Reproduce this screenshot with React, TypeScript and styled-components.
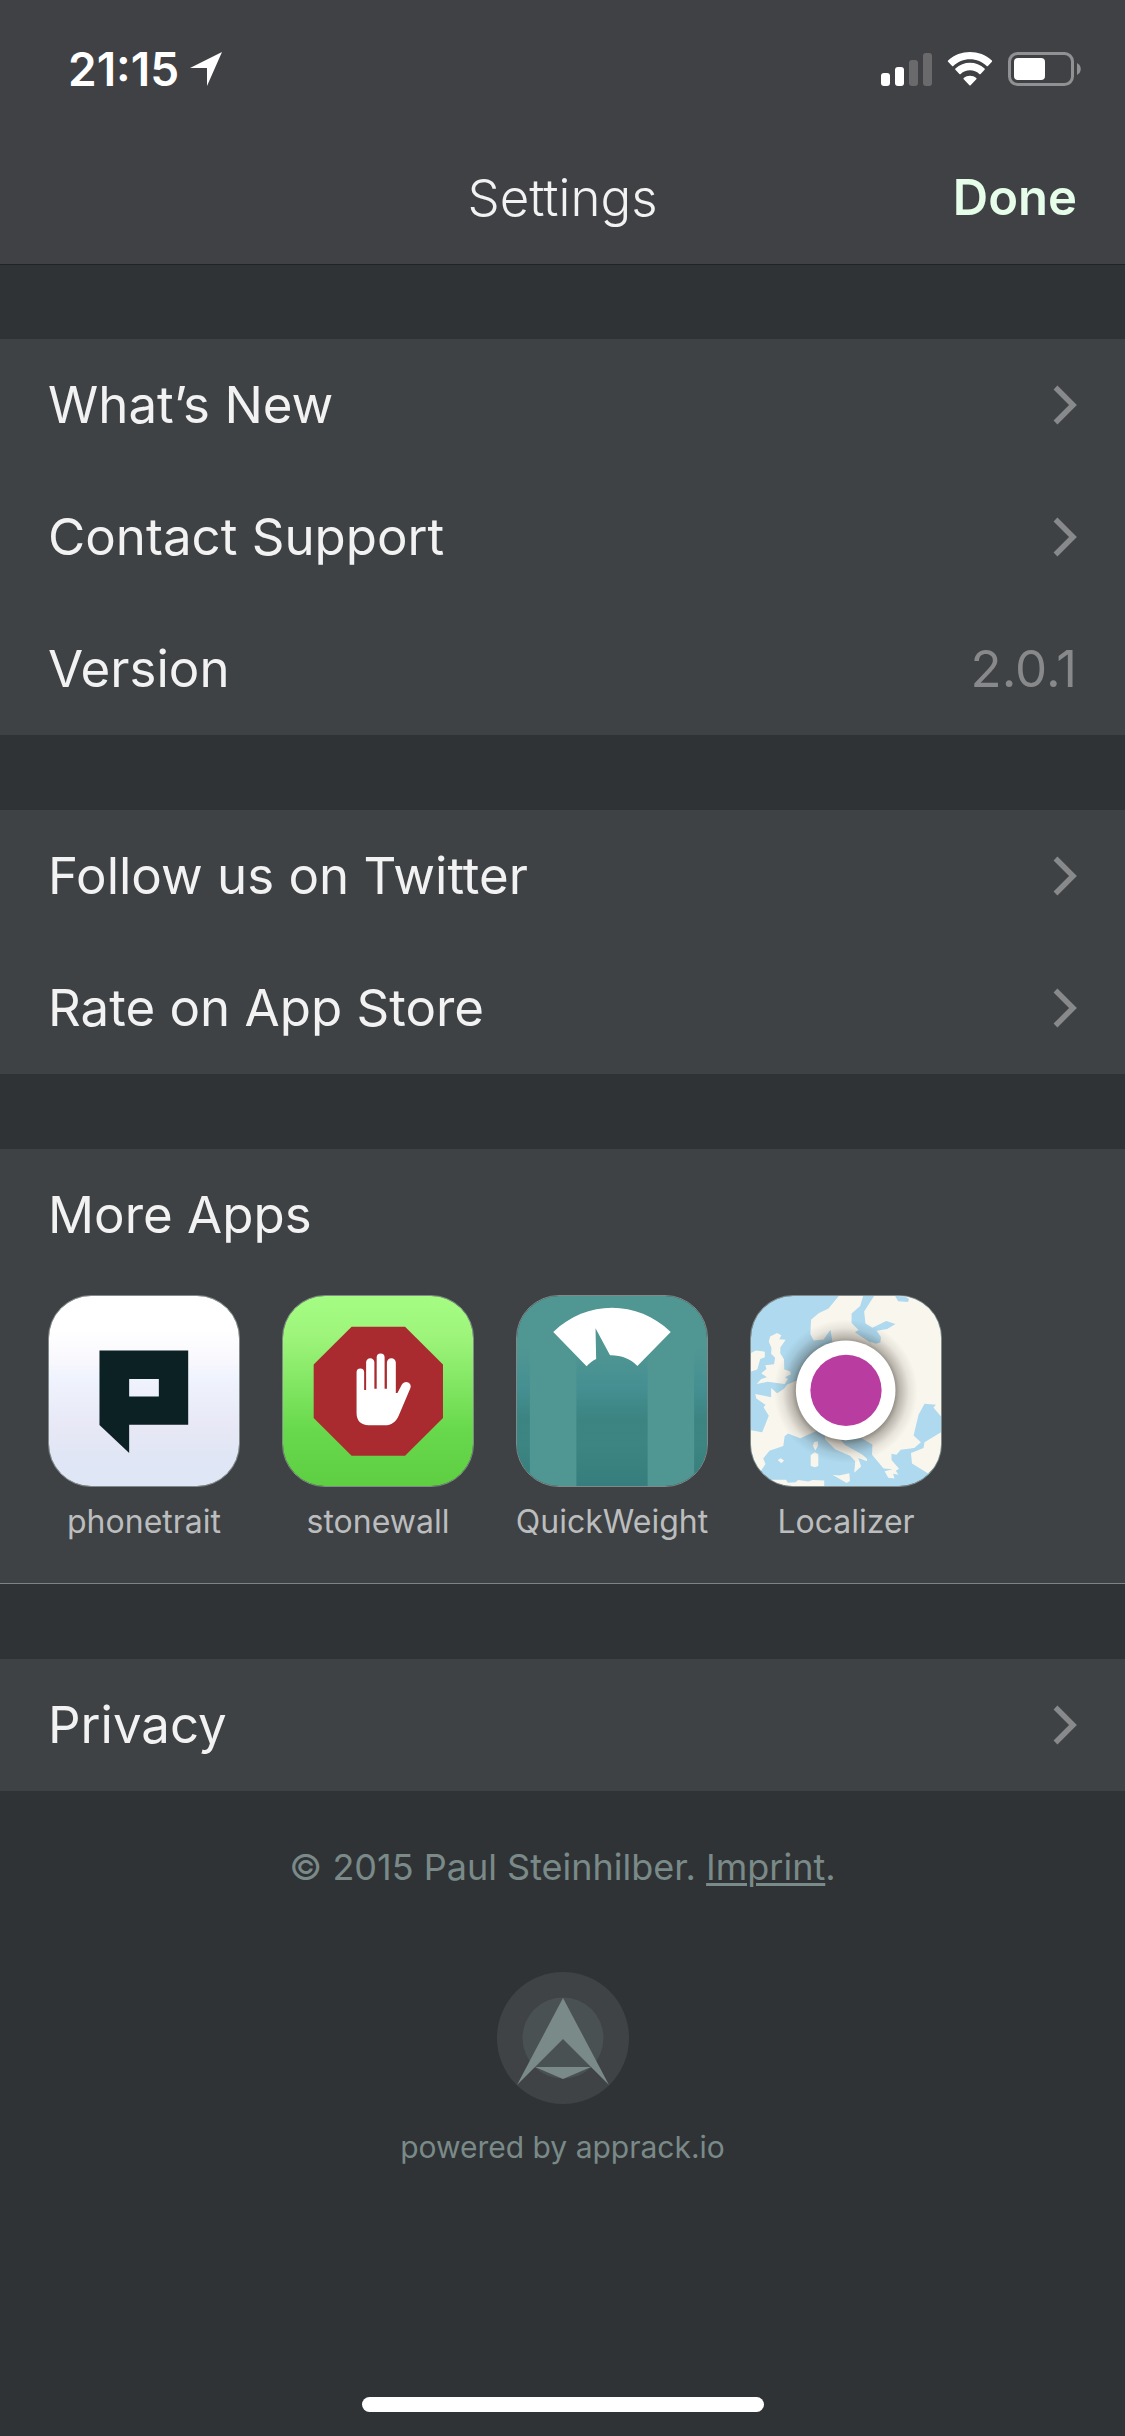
import React from "react";
import styled, { createGlobalStyle } from "styled-components";

const color = {
  page: "#2f3336",
  bar: "#404145",
  barLine: "#212226",
  section: "#3e4244",
  sectionLine: "#788786",
  text: "#f2f2f2",
  muted: "#88898b",
  caption: "#bcbdbe",
  accent: "#e6fdea",
  footer: "#7a8a88",
};

const GlobalStyle = createGlobalStyle`
  *, *::before, *::after { box-sizing: border-box; }
  body {
    margin: 0;
    background: ${color.page};
    color: ${color.text};
    font-family: Inter, "Liberation Sans", sans-serif;
  }
  h1, h2, p, ul { margin: 0; padding: 0; }
  ul { list-style: none; }
`;

const Screen = styled.div`
  display: flex;
  flex-direction: column;
  min-height: 100vh;
`;

const TopBar = styled.header`
  background: ${color.bar};
  border-bottom: 1px solid ${color.barLine};
`;

const StatusBar = styled.div`
  display: flex;
  align-items: center;
  justify-content: space-between;
  height: 132px;
  padding: 6px 44px 0 68px;
`;

const StatusGroup = styled.div<{ $gap: number }>`
  display: flex;
  align-items: center;
  gap: ${(p) => p.$gap}px;
`;

const Clock = styled.time`
  font-size: 46px;
  line-height: 54px;
  font-weight: 600;
  color: #fff;
`;

const NavBar = styled.div`
  display: grid;
  grid-template-columns: 1fr auto 1fr;
  align-items: center;
  height: 132px;
  padding: 0 48px;
`;

const Title = styled.h1`
  grid-column: 2;
  font-size: 51px;
  line-height: 64px;
  font-weight: 300;
`;

const DoneButton = styled.button`
  justify-self: end;
  padding: 0;
  border: 0;
  background: none;
  color: ${color.accent};
  font: inherit;
  font-size: 49px;
  line-height: 64px;
  font-weight: 600;
  cursor: pointer;
`;

const Content = styled.main`
  display: flex;
  flex-direction: column;
  gap: 75px;
  padding-top: 74px;
`;

const Section = styled.section<{ $lined?: boolean }>`
  background: ${color.section};
  border-bottom: ${(p) => (p.$lined ? `1px solid ${color.sectionLine}` : "0")};
`;

const Row = styled.div`
  display: flex;
  align-items: center;
  justify-content: space-between;
  height: 132px;
  padding: 0 48px;
  color: ${color.text};
  font-size: 51px;
  line-height: 64px;
  text-decoration: none;
`;

const Heading = styled.h2`
  font: inherit;
`;

const Value = styled.span`
  color: ${color.muted};
`;

const AppList = styled.ul`
  display: flex;
  gap: 42px;
  padding: 14px 48px 40px;
`;

const AppLink = styled.a`
  display: flex;
  flex-direction: column;
  align-items: center;
  gap: 14px;
  width: 192px;
  color: ${color.caption};
  font-size: 32px;
  line-height: 42px;
  white-space: nowrap;
  text-decoration: none;
`;

const AppIcon = styled.svg`
  display: block;
  width: 192px;
  height: 192px;
  border: 1px solid #808a88;
  border-radius: 43px;
`;

const Footer = styled.footer`
  display: flex;
  flex: 1;
  flex-direction: column;
  align-items: center;
  padding-top: 52px;
  color: ${color.footer};
`;

const Copyright = styled.p`
  font-size: 36px;
  line-height: 48px;
`;

const TextLink = styled.a`
  color: inherit;
  text-decoration-thickness: 3px;
  text-underline-offset: 3px;
`;

const PoweredBy = styled.a`
  display: flex;
  flex-direction: column;
  align-items: center;
  gap: 22px;
  margin-top: 81px;
  color: inherit;
  font-size: 30px;
  line-height: 42px;
  text-decoration: none;
`;

const HomeIndicator = styled.div`
  width: 402px;
  height: 15px;
  margin: auto auto 24px;
  border-radius: 8px;
  background: #fff;
`;

function LocationArrow() {
  return (
    <svg width="32" height="34" viewBox="0 0 32 34" aria-hidden="true">
      <path d="M32 0 17 34V16H0Z" fill="#fff" />
    </svg>
  );
}

function SignalIcon() {
  return (
    <svg width="51" height="33" viewBox="0 0 51 33" fill="#fff" aria-hidden="true">
      <rect x="0" y="20" width="9" height="13" rx="3" />
      <rect x="14" y="14" width="9" height="19" rx="3" />
      <rect x="28" y="7" width="9" height="26" rx="3" opacity="0.22" />
      <rect x="42" y="0" width="9" height="33" rx="3" opacity="0.22" />
    </svg>
  );
}

function WifiIcon() {
  return (
    <svg width="46" height="34" viewBox="0 0 46 34" fill="#fff" aria-hidden="true">
      <path d="M23 7.2c6.400 0 12.300 2.500 16.700 6.800.3.300.9.300 1.200 0l4-4.200c.3-.4.300-.9 0-1.300C32.700-2.800 13.300-2.800 1.100 8.500c-.4.400-.4.900 0 1.300l4 4.200c.3.300.9.300 1.200 0C10.700 9.700 16.600 7.200 23 7.200Z" />
      <path d="M23 18.300c3.500 0 6.800 1.300 9.300 3.600.4.300.9.300 1.300 0l4-4.200c.3-.4.300-.9 0-1.300-8.200-7.700-21-7.700-29.200 0-.3.400-.3.900 0 1.300l4 4.200c.4.300.9.300 1.300 0 2.500-2.300 5.800-3.600 9.300-3.600Z" />
      <path d="M29.300 26c.4.400.4 1 0 1.300l-5.700 5.900c-.3.400-.9.400-1.200 0L16.700 27.300c-.4-.3-.4-.9 0-1.300 3.600-3.100 9-3.100 12.600 0Z" />
    </svg>
  );
}

function BatteryIcon() {
  return (
    <svg width="73" height="34" viewBox="0 0 73 34" aria-hidden="true">
      <rect x="1.500" y="1.500" width="63" height="31" rx="8" fill="none" stroke="#909193" strokeWidth="3" />
      <rect x="6" y="6" width="31" height="22" rx="4" fill="#fff" />
      <path d="M69 11c5 2.500 5 9.500 0 12Z" fill="#909193" />
    </svg>
  );
}

function Chevron() {
  return (
    <svg width="24" height="40" viewBox="0 0 24 40" aria-hidden="true">
      <path d="M2.500 2.500 20 20 2.500 37.500" fill="none" stroke={color.muted} strokeWidth="5.500" />
    </svg>
  );
}

function PhonetraitIcon() {
  return (
    <AppIcon viewBox="54 75 576 576" aria-hidden="true">
      <defs>
        <linearGradient id="phonetrait-bg" x1="0" y1="0" x2="0" y2="1">
          <stop offset="0" stopColor="#fff" />
          <stop offset="0.180" stopColor="#fff" />
          <stop offset="0.350" stopColor="#f8f7fd" />
          <stop offset="0.420" stopColor="#f0f4fe" />
          <stop offset="0.680" stopColor="#e8e8f6" />
          <stop offset="0.850" stopColor="#e0e6f5" />
          <stop offset="1" stopColor="#dfe6f5" />
        </linearGradient>
      </defs>
      <rect x="54" y="75" width="576" height="576" fill="url(#phonetrait-bg)" />
      <path
        fillRule="evenodd"
        fill="#0c2124"
        d="M207 240H476V465H297V551L207 466ZM297 327V380H387V327Z"
      />
    </AppIcon>
  );
}

function StonewallIcon() {
  return (
    <AppIcon viewBox="51 75 576 576" aria-hidden="true">
      <defs>
        <linearGradient id="stonewall-bg" x1="0" y1="0" x2="0" y2="1">
          <stop offset="0" stopColor="#a4fd82" />
          <stop offset="0.200" stopColor="#9ff57c" />
          <stop offset="0.700" stopColor="#68d94c" />
          <stop offset="1" stopColor="#5ecf42" />
        </linearGradient>
      </defs>
      <rect x="51" y="75" width="576" height="576" fill="url(#stonewall-bg)" />
      <path fill="#a92b2f" d="M259 168H421L536 283V445L421 559H259L144 445V283Z" />
      <path
        fill="#fff"
        d="M274 306a11.500 11.500 0 0 1 23 0V360H303V276a12.500 12.500 0 0 1 25 0V356H335V261a12 12 0 0 1 24 0V356H366V277a13.500 13.500 0 0 1 27 0V369H398L411 344C421 327 444 339 437 355L402 437C394 456 379 467 360 467H311C287 467 274 453 274 430Z"
      />
    </AppIcon>
  );
}

function QuickWeightIcon() {
  return (
    <AppIcon viewBox="48 75 576 576" aria-hidden="true">
      <defs>
        <linearGradient id="quickweight-stripe" gradientUnits="userSpaceOnUse" x1="0" y1="230" x2="0" y2="650">
          <stop offset="0" stopColor="#509693" />
          <stop offset="0.300" stopColor="#458f92" />
          <stop offset="0.520" stopColor="#3b8482" />
          <stop offset="0.700" stopColor="#3c8582" />
          <stop offset="1" stopColor="#367e7d" />
        </linearGradient>
      </defs>
      <rect x="48" y="75" width="576" height="576" fill="#509693" />
      <path fill="url(#quickweight-stripe)" d="M48 230H87V651H48ZM228 230H444V651H228ZM585 230H624V651H585Z" />
      <path
        fill="#fff"
        d="M158 184C258 86 414 86 514 184L413 287C392 266 362 254 330 255L286 173 288 266C278 270 268 278 259 288Z"
      />
    </AppIcon>
  );
}

function LocalizerIcon() {
  return (
    <AppIcon viewBox="45 75 576 576" aria-hidden="true">
      <defs>
        <radialGradient id="localizer-shadow" gradientUnits="userSpaceOnUse" cx="332" cy="364" r="218">
          <stop offset="0.660" stopColor="#1a1208" stopOpacity="0.520" />
          <stop offset="0.750" stopColor="#1a1208" stopOpacity="0.280" />
          <stop offset="0.880" stopColor="#1a1208" stopOpacity="0.080" />
          <stop offset="1" stopColor="#1a1208" stopOpacity="0" />
        </radialGradient>
      </defs>
      <rect x="45" y="75" width="576" height="576" fill="#aed9ef" />
      <g fill="#f9f6ee">
        <path d="M311 75 280 113 250 127 227 147 225 190 235 210 265 207 286 177 296 240 410 240 405 215 360 185 371 178 350 157V128L376 105 385 75Z" />
        <path d="M418 75 388 122 392 158 413 171 455 151 483 160 458 175 426 180 439 200 437 216 424 220 407 214 400 330 200 325 183 332 155 343 145 356 124 370 106 354V382L58 372 61 386 89 405 83 412 99 438 79 488 45 482V651L85 590 89 584 82 568 101 544 143 530 147 500 157 492 194 506 243 484 268 492 270 510 301 540 345 559 361 576 358 611 379 592 370 566 397 576 396 568 383 556 330 527 316 510 378 505 413 525 412 556 447 598 474 600 450 606 461 626 480 628 476 614 492 617 484 605 494 599 471 572V553L486 556 499 541 540 536 560 518 538 498 553 435 571 402 606 405 598 413 621 440V75Z" />
        <path d="M621 488 571 518 568 536 530 551 533 583 581 612 621 580Z" />
        <path d="M45 248 60 240 87 244V261L73 266 64 298 45 304Z" />
        <path d="M99 214 103 198 124 187 137 194 131 206 150 208 134 231 134 249 145 267 146 298 164 304 166 312 148 321 157 327 147 342 95 335 62 342 76 327 93 321 76 309 92 296 88 285 115 282 118 262 106 250 107 232Z" />
        <path d="M236 518 248 515V529L240 543 233 530ZM226 558 238 549 249 555V590L239 594 226 590Z" />
        <path d="M292 617 312 619 343 612 345 636 335 642Z" />
        <path d="M126 572 135 567 145 574 137 582Z" />
        <path d="M105 632 151 632 157 641 180 640 188 633 219 637 232 633 267 634V651H105Z" />
      </g>
      <path fill="#aed9ef" d="M482 75 491 91 521 93 524 84 510 75Z" />
      <circle cx="332" cy="364" r="218" fill="url(#localizer-shadow)" />
      <circle cx="332" cy="361" r="151" fill="#fff" />
      <circle cx="333" cy="361" r="108" fill="#b93ca1" />
    </AppIcon>
  );
}

function ApprackLogo() {
  return (
    <svg width="132" height="132" viewBox="0 0 132 132" aria-hidden="true">
      <circle cx="66" cy="66" r="66" fill="#3f4346" />
      <circle cx="66" cy="66" r="40.500" fill="#4a5153" />
      <path fill={color.footer} d="M66 26 112 113 66 67 20 113ZM38 95H94L66 107Z" />
    </svg>
  );
}

const apps = [
  { name: "phonetrait", Icon: PhonetraitIcon },
  { name: "stonewall", Icon: StonewallIcon },
  { name: "QuickWeight", Icon: QuickWeightIcon },
  { name: "Localizer", Icon: LocalizerIcon },
];

function LinkRow({ label }: { label: string }) {
  return (
    <Row as="a" href="#">
      {label}
      <Chevron />
    </Row>
  );
}

export default function App() {
  return (
    <Screen>
      <GlobalStyle />
      <TopBar>
        <StatusBar>
          <StatusGroup $gap={11}>
            <Clock>21:15</Clock>
            <LocationArrow />
          </StatusGroup>
          <StatusGroup $gap={15}>
            <SignalIcon />
            <WifiIcon />
            <BatteryIcon />
          </StatusGroup>
        </StatusBar>
        <NavBar>
          <Title>Settings</Title>
          <DoneButton type="button">Done</DoneButton>
        </NavBar>
      </TopBar>
      <Content>
        <Section>
          <LinkRow label="What’s New" />
          <LinkRow label="Contact Support" />
          <Row>
            Version
            <Value>2.0.1</Value>
          </Row>
        </Section>
        <Section>
          <LinkRow label="Follow us on Twitter" />
          <LinkRow label="Rate on App Store" />
        </Section>
        <Section $lined>
          <Row>
            <Heading>More Apps</Heading>
          </Row>
          <AppList>
            {apps.map(({ name, Icon }) => (
              <li key={name}>
                <AppLink href="#">
                  <Icon />
                  {name}
                </AppLink>
              </li>
            ))}
          </AppList>
        </Section>
        <Section>
          <LinkRow label="Privacy" />
        </Section>
      </Content>
      <Footer>
        <Copyright>
          © 2015 Paul Steinhilber. <TextLink href="#">Imprint</TextLink>.
        </Copyright>
        <PoweredBy href="#">
          <ApprackLogo />
          powered by apprack.io
        </PoweredBy>
        <HomeIndicator />
      </Footer>
    </Screen>
  );
}
